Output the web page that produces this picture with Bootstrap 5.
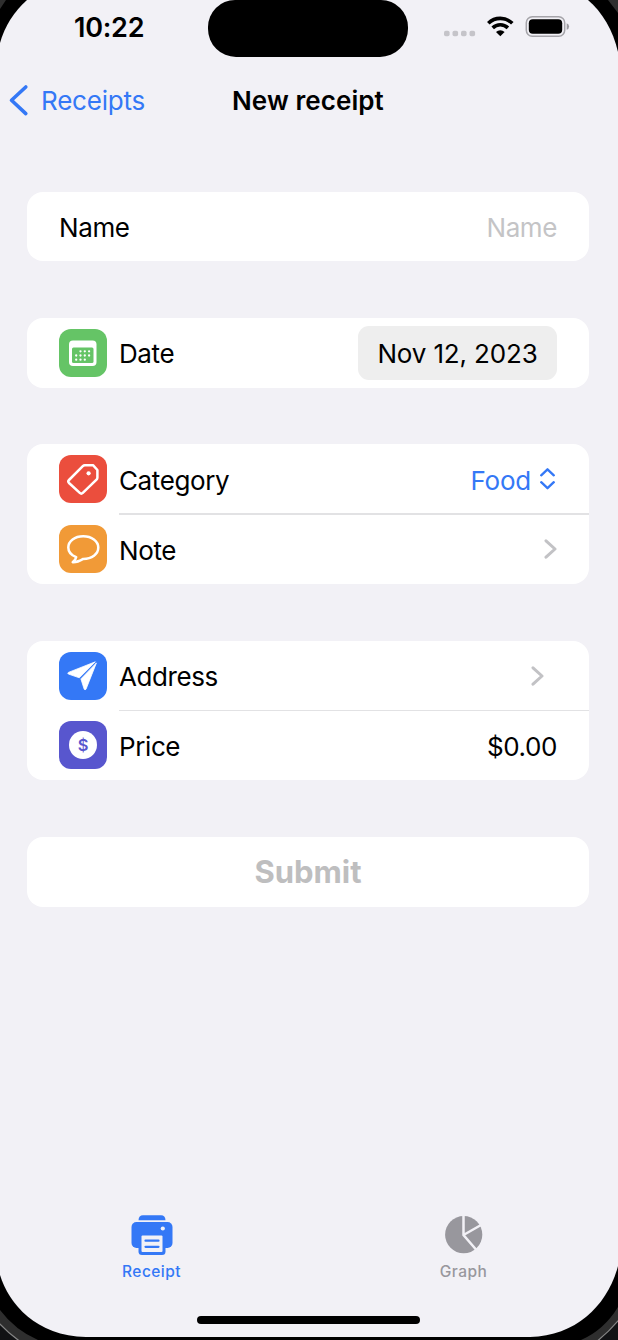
<!DOCTYPE html>
<html lang="en">
<head>
<meta charset="utf-8">
<meta name="viewport" content="width=device-width, initial-scale=1">
<title>New receipt</title>
<link rel="stylesheet" href="https://cdn.jsdelivr.net/npm/bootstrap@5.3.0/dist/css/bootstrap.min.css">
<style>
  :root { --ios-blue: #3478f6; }
  body { font-family: Inter, "Liberation Sans", sans-serif; font-size: 26px; line-height: 1.2; color: #000; background: #f2f1f6; letter-spacing: -.4px; }
  svg { display: block; flex: none; }
  .phone { width: 618px; height: 1340px; isolation: isolate; }
  .bezel { z-index: -1; }
  .statusbar { height: 57px; }
  .clock { width: 208px; padding: 11.5px 0 0 74px; font-size: 27px; font-weight: 600; letter-spacing: -.25px; }
  .island { width: 200px; height: 56.5px; background: #000; border-radius: 27px 27px 28px 28px; }
  .signals { padding: 15px 0 0 36px; }
  .navline { height: 86px; }
  .navline span, .page-title { padding-top: 2px; }
  .back { width: 232px; padding-left: 8px; color: var(--ios-blue); letter-spacing: -.2px; }
  .back span { margin-left: -1px; }
  .page-title { font-size: 26px; font-weight: 600; letter-spacing: .08px; }
  .sections { padding: 48.5px 29px 0 27px; gap: 56.7px; }
  .group { border-radius: 16px; background: #fff; }
  .line { height: 69.8px; padding: 0 32px; position: relative; }
  .line > span:not(.date-pill) { padding-top: 2px; }
  .line + .line::before { content: ""; position: absolute; left: 92px; right: 0; top: -1px; height: 1.4px; background: #e2e2e4; }
  .tile { width: 48px; height: 48px; margin: 0 12.5px 0 -.5px; flex: none; }
  .hint { color: #c4c4c6; }
  .choice { color: var(--ios-blue); letter-spacing: -.2px; }
  .date-pill { width: 199px; height: 54px; border-radius: 11px; background: #eee; letter-spacing: -.15px; padding-top: 2px; }
  .forward { margin-right: 13px; }
  .submit { font-size: 31px; font-weight: 700; color: #bebebf; background: #fff; border: 0; border-radius: 16px; height: 69.8px; }
  .tabs { height: 102px; }
  .tab-item { font-size: 15.5px; font-weight: 500; letter-spacing: .45px; color: #98979d; }
  .tab-item span { margin-top: 6.5px; }
  .tab-item.current { color: var(--ios-blue); padding-right: 6px; }
  .home-bar { position: absolute; left: 197px; bottom: 16px; width: 223px; height: 8px; border-radius: 4px; background: #000; }
</style>
</head>
<body>
<div class="phone position-relative d-flex flex-column overflow-hidden">
  <svg class="bezel position-absolute top-0 start-0" width="618" height="1340" viewBox="0 0 618 1340">
    <rect width="618" height="1340" fill="#000"/>
    <path d="M0 0H6L0 9ZM608 0H618V13Z" fill="#2e2e2e"/>
    <path d="M0 1310Q15 1330 38 1340H0ZM618 1307Q604 1330 581 1340H618Z" fill="#2e2e2e"/>
    <path d="M-2 1322Q9 1334 21 1342H-2ZM620 1318.500Q609 1332 596 1342H620Z" fill="#111214" stroke="#858585" stroke-width="1.2"/>
    <path d="M27 0Q7 18 0 43V1275C9 1304 36 1336 86 1337H530C577 1336 608 1304 618 1266V52C613 30 602 12 588 0Z" fill="#f2f1f6"/>
  </svg>

  <header>
    <div class="statusbar d-flex align-items-start">
      <div class="clock">10:22</div>
      <div class="island"></div>
      <div class="signals d-flex">
        <svg width="126" height="24" viewBox="444 15 126 24">
          <g fill="#c5c4c9"><rect x="444" y="30.700" width="5.6" height="5.6" rx="1.8"/><rect x="452.5" y="30.700" width="5.6" height="5.6" rx="1.8"/><rect x="461" y="30.700" width="5.6" height="5.6" rx="1.8"/><rect x="469.5" y="30.700" width="5.6" height="5.6" rx="1.8"/></g>
          <g fill="none" stroke="#000" stroke-width="3.6"><path d="M488.3 23.3a17 17 0 0 1 24 0"/><path d="M492.7 27.9a10.8 10.8 0 0 1 15.2 0"/></g>
          <path d="M496 32a6.2 6.2 0 0 1 8.6 0L500.3 36.3Z"/>
          <rect x="526.3" y="16.8" width="38.4" height="19.4" rx="6" fill="none" stroke="#a5a4a9" stroke-width="1.5"/>
          <rect x="528.8" y="19.2" width="33.4" height="14.6" rx="4"/>
          <path d="M566.7 23.2q2.4.8 2.4 3.3t-2.4 3.3Z" fill="#9b9aa0"/>
        </svg>
      </div>
    </div>
    <nav class="navline d-flex align-items-center">
      <div class="back d-flex align-items-center">
        <svg width="34" height="34" viewBox="8 83 34 34"><path d="M25.8 87 11.5 100.3 25.8 113.6" fill="none" stroke="currentColor" stroke-width="3.6" stroke-linecap="round" stroke-linejoin="round"/></svg>
        <span>Receipts</span>
      </div>
      <div class="page-title">New receipt</div>
    </nav>
  </header>

  <main class="sections d-flex flex-column flex-grow-1">
    <section class="group">
      <div class="line d-flex align-items-center justify-content-between"><span>Name</span><span class="hint">Name</span></div>
    </section>

    <section class="group">
      <div class="line d-flex align-items-center">
        <svg class="tile" viewBox="0 0 48 48"><rect width="48" height="48" rx="12" fill="#65c466"/><rect x="10" y="11.5" width="27.5" height="25.5" rx="4" fill="#fff"/><rect x="13" y="18.5" width="21.5" height="15.5" rx="1.5" fill="#65c466"/><g fill="none" stroke="#fff" stroke-width="2.3" stroke-linecap="round" stroke-dasharray="0 4.3"><path d="M21.500 22.3h9"/><path d="M17.2 26.5h13.2"/><path d="M17.2 30.7h9"/></g></svg>
        <span>Date</span>
        <span class="date-pill ms-auto d-flex align-items-center justify-content-center">Nov 12, 2023</span>
      </div>
    </section>

    <section class="group">
      <div class="line d-flex align-items-center">
        <svg class="tile" viewBox="0 0 48 48"><rect width="48" height="48" rx="12" fill="#eb4e3d"/><path d="M25.8 10.2H34L38.4 15V22.5Q38.4 23.8 37.5 24.7L23.8 37.9Q22.3 39.3 20.8 37.9L10 28Q8.5 26.5 10 25L23.8 11.2Q24.8 10.2 25.8 10.2Z" fill="none" stroke="#fff" stroke-width="2.5" stroke-linejoin="round"/><circle cx="29.6" cy="18.3" r="2.1" fill="#fff"/></svg>
        <span>Category</span>
        <span class="choice ms-auto d-flex align-items-center">Food
          <svg class="ms-2" width="18" height="24" viewBox="0 0 18 24"><path d="M2.2 7.3 8.500 1.300l6.3 6M2.2 14.200l6.3 6 6.3-6" fill="none" stroke="currentColor" stroke-width="2.3" stroke-linecap="round" stroke-linejoin="round"/></svg>
        </span>
      </div>
      <div class="line d-flex align-items-center">
        <svg class="tile" viewBox="0 0 48 48"><rect width="48" height="48" rx="12" fill="#f19a37"/><path d="M17.2 32.2C12 30.2 9.3 26.8 9.3 22.6 9.3 16 15.8 11.3 24.2 11.3S39.3 16 39.3 22.6 32.8 33.9 24.2 33.9C21 35.8 17.5 37.5 13.7 37.2 15.8 35.5 17 34 17.2 32.2Z" fill="none" stroke="#fff" stroke-width="2.5" stroke-linejoin="round"/></svg>
        <span>Note</span>
        <svg class="ms-auto" width="13" height="20" viewBox="0 0 13 20"><path d="M2 1.8 11 10 2 18.2" fill="none" stroke="#c2c2c5" stroke-width="3" stroke-linecap="round" stroke-linejoin="round"/></svg>
      </div>
    </section>

    <section class="group">
      <div class="line d-flex align-items-center">
        <svg class="tile" viewBox="0 0 48 48"><rect width="48" height="48" rx="12" fill="#3478f6"/><path d="M36.3 9.8 9.4 20.4Q8.2 21.1 9.3 22L20.3 25.8Z" fill="#fff" stroke="#fff" stroke-width=".8" stroke-linejoin="round"/><path d="M37.4 10.9 27 37.2Q26 38.3 25.2 37.2L21.9 26.9Z" fill="#fff" stroke="#fff" stroke-width=".8" stroke-linejoin="round"/></svg>
        <span>Address</span>
        <svg class="forward ms-auto" width="13" height="20" viewBox="0 0 13 20"><path d="M2 1.8 11 10 2 18.2" fill="none" stroke="#c2c2c5" stroke-width="3" stroke-linecap="round" stroke-linejoin="round"/></svg>
      </div>
      <div class="line d-flex align-items-center">
        <svg class="tile" viewBox="0 0 48 48"><rect width="48" height="48" rx="12" fill="#5856ce"/><circle cx="24" cy="24" r="14" fill="#fff"/><text x="24" y="30" text-anchor="middle" font-size="16.5" font-weight="600" letter-spacing="0" fill="#5856ce">$</text></svg>
        <span>Price</span>
        <span class="ms-auto">$0.00</span>
      </div>
    </section>

    <button class="submit w-100" type="button">Submit</button>
  </main>

  <footer class="tabs row g-0 mb-4">
    <div class="tab-item current col-6 d-flex flex-column align-items-center">
      <svg width="42" height="42" viewBox="130.5 1214 42 42"><path d="M138 1220.2Q138.2 1215.3 142.5 1215.3H160.5Q164.8 1215.3 165 1220.2Z" fill="currentColor"/><rect x="131" y="1222" width="41" height="26" rx="5" fill="currentColor"/><circle cx="162.3" cy="1228.5" r="2.1" fill="#f2f1f6"/><rect x="138" y="1234" width="27" height="21" rx="3.5" fill="currentColor"/><rect x="141" y="1235.5" width="21" height="16.5" rx="1" fill="#f2f1f6"/><path d="M145 1240.7h13M145 1246.8h13" stroke="currentColor" stroke-width="2.2" stroke-linecap="round"/></svg>
      <span>Receipt</span>
    </div>
    <div class="tab-item col-6 d-flex flex-column align-items-center">
      <svg width="42" height="42" viewBox="443.5 1214 42 42"><circle cx="464.2" cy="1234.7" r="18.6" fill="currentColor"/><path d="M464 1215V1235L476.5 1249.5M464 1235 481.5 1225" fill="none" stroke="#f2f1f6" stroke-width="2.5"/></svg>
      <span>Graph</span>
    </div>
  </footer>
  <div class="home-bar"></div>
</div>
<script src="https://cdn.jsdelivr.net/npm/bootstrap@5.3.0/dist/js/bootstrap.bundle.min.js"></script>
</body>
</html>
